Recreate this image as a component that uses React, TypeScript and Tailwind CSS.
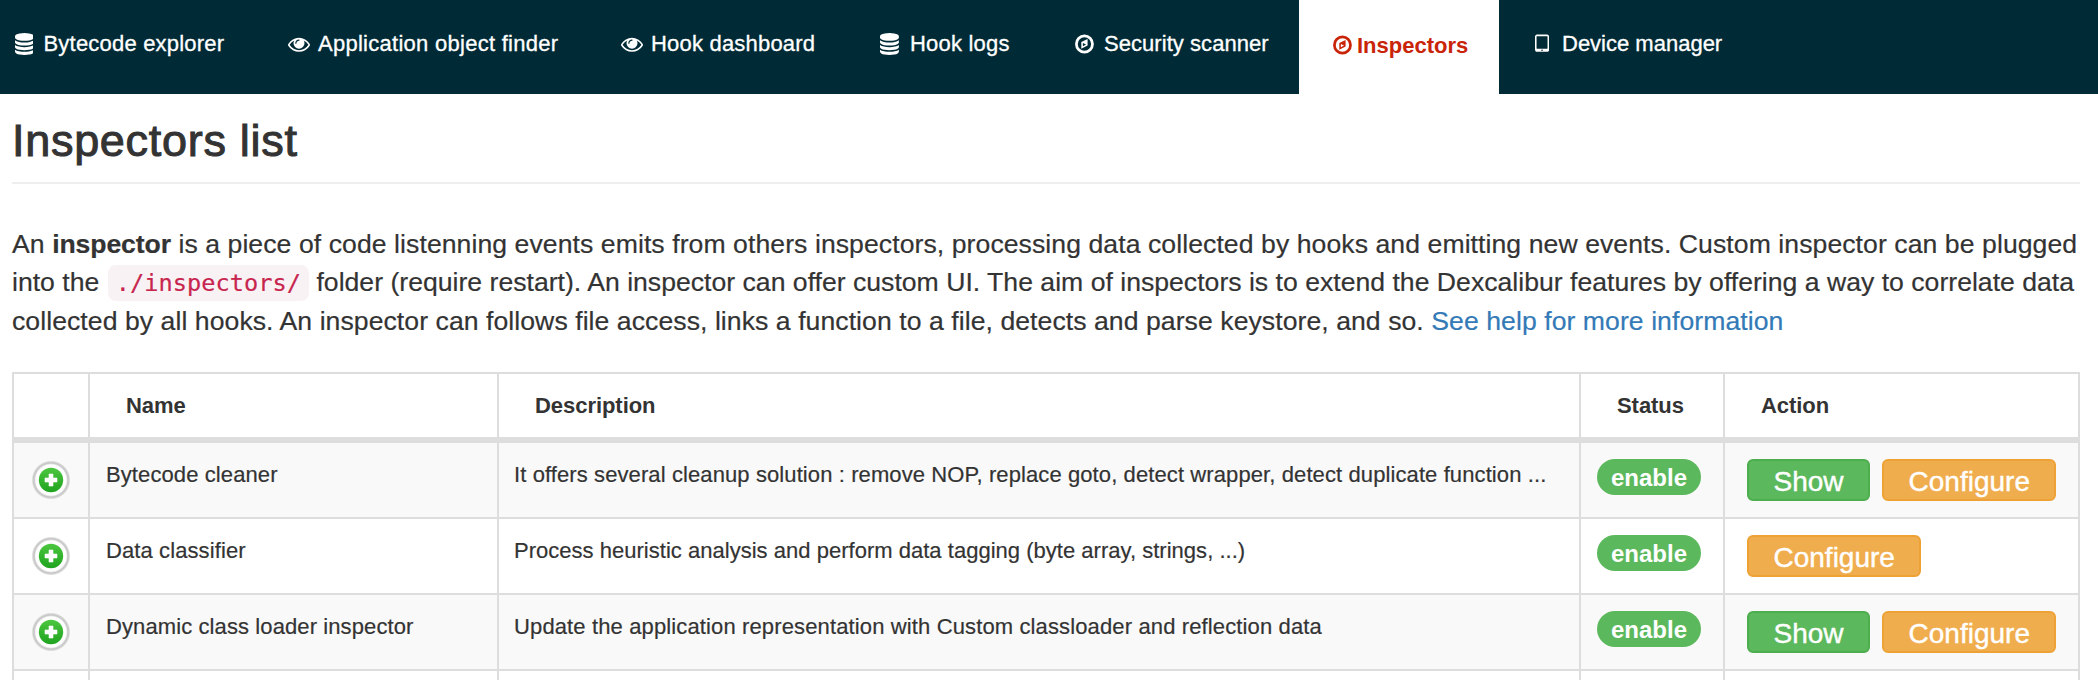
import type { ReactNode } from "react";

function DatabaseIcon() {
  return (
    <svg className="h-[22px] w-[18.9px]" viewBox="0 0 1536 1792" fill="currentColor">
      <path d="M768 768q237 0 443-43t325-127v170q0 69-103 128t-280 93.5-385 34.5-385-34.5-280-93.5-103-128v-170q119 84 325 127t443 43zm0 768q237 0 443-43t325-127v170q0 69-103 128t-280 93.5-385 34.5-385-34.5-280-93.5-103-128v-170q119 84 325 127t443 43zm0-384q237 0 443-43t325-127v170q0 69-103 128t-280 93.5-385 34.5-385-34.5-280-93.5-103-128v-170q119 84 325 127t443 43zm0-1152q208 0 385 34.5t280 93.5 103 128v128q0 69-103 128t-280 93.5-385 34.5-385-34.5-280-93.5-103-128v-128q0-69 103-128t280-93.5 385-34.5z" />
    </svg>
  );
}

function EyeIcon() {
  return (
    <svg className="size-[22px]" viewBox="0 0 1792 1792" fill="currentColor">
      <path d="M1664 960q-152-236-381-353 61 104 61 225 0 185-131.5 316.5t-316.5 131.5-316.5-131.5-131.5-316.5q0-121 61-225-229 117-381 353 133 205 333.5 326.5t434.5 121.5 434.5-121.5 333.5-326.5zm-720-384q0-20-14-34t-34-14q-125 0-214.5 89.5t-89.5 214.5q0 20 14 34t34 14 34-14 14-34q0-86 61-147t147-61q20 0 34-14t14-34zm848 384q0 34-20 69-140 230-376.5 368.5t-499.5 138.5-499.5-139-376.5-368q-20-35-20-69t20-69q140-229 376.5-368t499.5-139 499.5 139 376.5 368q20 35 20 69z" />
    </svg>
  );
}

function CompassIcon() {
  return (
    <svg className="h-[22px] w-[18.9px]" viewBox="0 0 1536 1792">
      <circle cx="768" cy="896" r="656" fill="none" stroke="currentColor" strokeWidth="224" />
      <path fill="currentColor" fillRule="evenodd" d="M1024 482v542l-512 256V738zM640 1073l256-128-256-128z" />
    </svg>
  );
}

function TabletIcon() {
  return (
    <svg className="h-[22px] w-[14.1px]" viewBox="0 0 1152 1792" fill="currentColor">
      <path d="M640 1408q0-26-19-45t-45-19-45 19-19 45 19 45 45 19 45-19 19-45zm384-160v-960q0-13-9.5-22.5t-22.5-9.5h-832q-13 0-22.5 9.5t-9.5 22.5v960q0 13 9.5 22.5t22.5 9.5h832q13 0 22.5-9.5t9.5-22.5zm128-960v1088q0 66-47 113t-113 47h-832q-66 0-113-47t-47-113v-1088q0-66 47-113t113-47h832q66 0 113 47t47 113z" />
    </svg>
  );
}

function NavItem({ icon, label, width, slot, text = "" }: { icon: ReactNode; label: string; width: string; slot: string; text?: string }) {
  return (
    <a className={`flex shrink-0 items-start whitespace-nowrap pt-[33px] text-white ${width}`}>
      <span className={`shrink-0 ${slot}`}>{icon}</span>
      <span className={`-mt-px leading-6 [-webkit-text-stroke:0.3px_#fff] ${text}`}>{label}</span>
    </a>
  );
}

function PlusBadge() {
  return (
    <svg className="ml-[17px] size-10" viewBox="0 0 40 40">
      <defs>
        <linearGradient id="plus-green" x1="0" y1="0" x2="0" y2="1">
          <stop offset="0" stopColor="#4cc63f" />
          <stop offset="1" stopColor="#1fa31f" />
        </linearGradient>
        <radialGradient id="plus-ring">
          <stop offset=".78" stopColor="#fff" />
          <stop offset=".86" stopColor="#c8c8c8" />
          <stop offset=".92" stopColor="#cecece" />
          <stop offset="1" stopColor="#cecece" stopOpacity="0" />
        </radialGradient>
      </defs>
      <circle cx="20" cy="20" r="19.5" fill="url(#plus-ring)" />
      <circle cx="20" cy="20" r="12.2" fill="url(#plus-green)" />
      <path d="M18 14h4v4h4v4h-4v4h-4v-4h-4v-4h4z" fill="#fff" stroke="#fff" strokeWidth=".6" strokeLinejoin="round" />
    </svg>
  );
}

const inspectors = [
  {
    name: "Bytecode cleaner",
    description: "It offers several cleanup solution : remove NOP, replace goto, detect wrapper, detect duplicate function ...",
    show: true,
    spacing: "tracking-[0.1px]",
  },
  {
    name: "Data classifier",
    description: "Process heuristic analysis and perform data tagging (byte array, strings, ...)",
    show: false,
    spacing: "tracking-[0.02px]",
  },
  {
    name: "Dynamic class loader inspector",
    description: "Update the application representation with Custom classloader and reflection data",
    show: true,
    spacing: "tracking-[0.13px]",
  },
];

const button = "flex h-[42px] items-center rounded-md border-2 px-[24.5px] pt-[3px] text-[28px] leading-none text-white [-webkit-text-stroke:0.4px_#fff]";
const head = "border-r-2 border-b-6 border-[#ddd] pt-px pl-[36px] text-left align-middle font-bold tracking-[-0.05px]";
const cell = "border-r-2 border-b-2 border-[#ddd] p-0 align-top";

export default function App() {
  return (
    <div className="h-[680px] w-[2098px] overflow-hidden bg-white font-['Liberation_Sans',Arial,sans-serif] text-[22px] text-[#333]">
      <nav className="flex h-[94px] bg-[#002b36] pl-[14.5px]">
        <NavItem icon={<DatabaseIcon />} label="Bytecode explorer" width="w-[273px]" slot="w-[29px]" text="tracking-[0.2px]" />
        <NavItem icon={<EyeIcon />} label="Application object finder" width="w-[333px]" slot="w-[30.5px]" text="tracking-[0.27px]" />
        <NavItem icon={<EyeIcon />} label="Hook dashboard" width="w-[259.5px]" slot="w-[30.5px]" text="tracking-[0.2px]" />
        <NavItem icon={<DatabaseIcon />} label="Hook logs" width="w-[195px]" slot="w-[30px]" text="tracking-[0.2px]" />
        <NavItem icon={<CompassIcon />} label="Security scanner" width="w-[224px]" slot="w-[29px]" text="tracking-[0.05px]" />
        <a className="flex w-[200px] shrink-0 items-start bg-white pt-[34px] pl-[34px] font-bold text-[#c92408]">
          <span className="w-[24px] shrink-0">
            <CompassIcon />
          </span>
          <span className="leading-6">Inspectors</span>
        </a>
        <NavItem icon={<TabletIcon />} label="Device manager" width="w-[300px] pl-[36px]" slot="w-[27px]" />
      </nav>

      <main className="px-3">
        <h1 className="h-[90px] w-[2068px] border-b-2 border-[#eee] pt-5 text-[45px] leading-[54px] tracking-[0.7px] [-webkit-text-stroke:1px_#333]">
          Inspectors list
        </h1>

        <p className="mt-[41px] h-[147px] text-[26.6px] leading-[38px] whitespace-nowrap [-webkit-text-stroke-width:0.2px]">
          <span className="block tracking-[0.07px]">
            An <b className="tracking-[-0.1px]">inspector</b> is a piece of code listenning events emits from others inspectors, processing data
            collected by hooks and emitting new events. Custom inspector can be plugged
          </span>
          <span className="block tracking-[0.01px]">
            into the{" "}
            <code className="ml-px rounded-lg bg-[#f9f2f4] px-2 py-1 font-['DejaVu_Sans_Mono',monospace] text-[23.6px] tracking-[0.05px] text-[#c7254e]">
              ./inspectors/
            </code>{" "}
            folder (require restart). An inspector can offer custom UI. The aim of inspectors is to extend the Dexcalibur features by offering a way
            to correlate data
          </span>
          <span className="block tracking-[0.06px]">
            collected by all hooks. An inspector can follows file access, links a function to a file, detects and parse keystore, and so.{" "}
            <a className="text-[#337ab7]">See help for more information</a>
          </span>
        </p>

        <table className="w-[2068px] table-fixed border-separate border-spacing-0 border-t-2 border-l-2 border-[#ddd] leading-[30px]">
          <colgroup>
            <col className="w-[76px]" />
            <col className="w-[409px]" />
            <col className="w-[1082px]" />
            <col className="w-[144px]" />
            <col className="w-[355px]" />
          </colgroup>
          <thead>
            <tr className="h-[69px]">
              <th className={head} />
              <th className={head}>Name</th>
              <th className={head}>Description</th>
              <th className={head}>Status</th>
              <th className={head}>Action</th>
            </tr>
          </thead>
          <tbody>
            {inspectors.map((item) => (
              <tr key={item.name} className="h-[76px] odd:bg-[#f9f9f9]">
                <td className={`${cell} pt-[17px]`}>
                  <PlusBadge />
                </td>
                <td className={`${cell} pt-[17px] pl-4 tracking-[0.1px] [-webkit-text-stroke:0.2px_#333]`}>{item.name}</td>
                <td className={`${cell} pt-[17px] pl-[15px] [-webkit-text-stroke:0.2px_#333] ${item.spacing}`}>{item.description}</td>
                <td className={`${cell} pt-4 pl-4`}>
                  <span className="flex h-9 w-[104px] items-center justify-center rounded-full bg-[#5cb85c] pt-0.5 text-2xl leading-none font-bold text-white">
                    enable
                  </span>
                </td>
                <td className={`${cell} pt-4 pl-[22px]`}>
                  <div className="flex gap-3">
                    {item.show && <span className={`${button} border-[#4cae4c] bg-[#5cb85c]`}>Show</span>}
                    <span className={`${button} border-[#eea236] bg-[#f0ad4e]`}>Configure</span>
                  </div>
                </td>
              </tr>
            ))}
            <tr className="h-[76px]">
              <td className={cell} />
              <td className={cell} />
              <td className={cell} />
              <td className={cell} />
              <td className={cell} />
            </tr>
          </tbody>
        </table>
      </main>
    </div>
  );
}
